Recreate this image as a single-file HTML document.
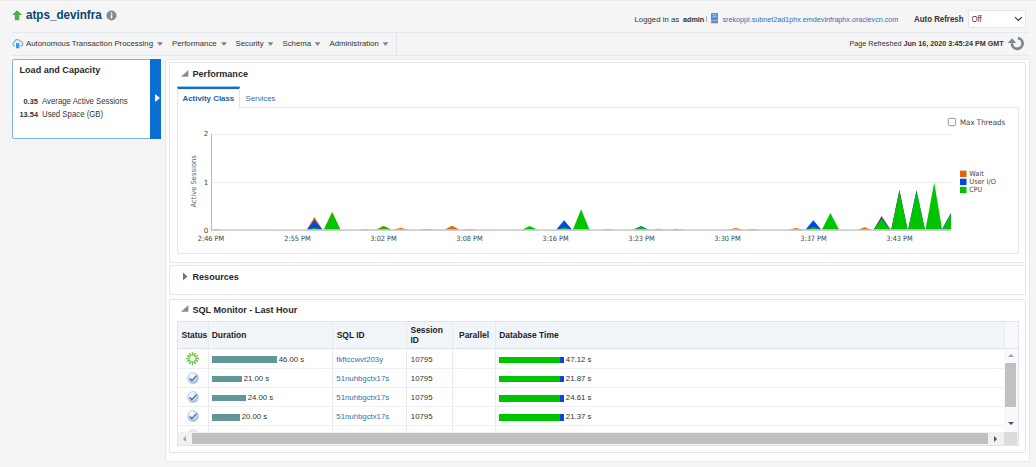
<!DOCTYPE html>
<html><head><meta charset="utf-8"><title>atps_devinfra</title>
<style>
html,body{margin:0;padding:0}
body{width:1036px;height:467px;overflow:hidden;background:#f5f5f5;font-family:"Liberation Sans",Arial,sans-serif;font-size:7.8px;color:#333;position:relative}
.abs{position:absolute;white-space:nowrap}
.t{position:absolute;white-space:nowrap;line-height:10px}
b,.b{font-weight:bold}
.hl{position:absolute;height:1px;background:#e4e9ef}
.panel{position:absolute;background:#fff;border:1px solid #e0e6ec;border-radius:2px;box-sizing:border-box}
.menu .t{top:38.5px}
.arr{position:absolute;width:5.8px;height:3.7px;background:#80868c;clip-path:polygon(0 0,100% 0,50% 100%);top:42.2px;margin-left:0.1px}
.ph{font-size:9.08px;font-weight:bold;color:#2a2a2a}
th,td{padding:0}
.cell{position:absolute;white-space:nowrap;line-height:10px}
.link{color:#2f6fb5}
.hd{transform:translateY(0.7px) scaleY(1.05);transform-origin:0 80%}
.hd2{transform:translateY(-0.3px) scaleY(1.06);transform-origin:0 80%}
</style></head><body>
<div class="abs" style="left:0;top:0;width:1036px;height:1px;background:#ebebeb"></div>

<!-- title row -->
<svg class="abs" style="left:11px;top:8.6px" width="13" height="13" viewBox="0 0 13 13"><path d="M6 1.2 L11.2 5.9 H8.3 V11.3 H3.8 V5.9 H1 Z" fill="#4cae4f"/></svg>
<div class="t" style="left:26px;top:7.6px;font-size:11.65px;line-height:14px;font-weight:bold;color:#0d4470;transform:scaleY(1.06);transform-origin:50% 70%">atps_devinfra</div>
<svg class="abs" style="left:105.7px;top:9.5px" width="11" height="11" viewBox="0 0 11 11"><circle cx="5.5" cy="5.5" r="5" fill="#878a8d"/><rect x="4.8" y="4.6" width="1.5" height="3.8" fill="#fff"/><rect x="4.8" y="2.5" width="1.5" height="1.4" fill="#fff"/></svg>

<div class="t" style="left:634.5px;top:14px;transform:translateY(0.7px) scaleY(1.02);transform-origin:0 80%">Logged in as</div>
<div class="t b" style="left:683.3px;top:14px;font-size:7.8px;transform:translateY(0.7px) scale(0.925,1.03);transform-origin:0 80%">admin</div>
<div class="abs" style="left:706px;top:15.5px;width:1px;height:6px;background:#a9b7c6"></div>
<svg class="abs" style="left:711px;top:13px" width="7" height="10.5" viewBox="0 0 7 10.5"><rect x="0" y="0" width="7" height="7.6" rx="0.6" fill="#4a8fe0"/><rect x="1.3" y="1.3" width="4.4" height="0.9" fill="#a9cdf5"/><rect x="1.3" y="3.3" width="4.4" height="0.9" fill="#a9cdf5"/><rect x="0" y="7.6" width="7" height="2.7" fill="#7f93a8"/><rect x="1" y="8.5" width="2" height="0.9" fill="#5f7489"/><rect x="4" y="8.5" width="2" height="0.9" fill="#5f7489"/></svg>
<div class="t link hd" style="left:722.5px;top:14px;font-size:7.2px">srekoppi.subnet2ad1phx.emdevinfraphx.oraclevcn.com</div>
<div class="t b hd" style="left:914px;top:14px;font-size:7.9px">Auto Refresh</div>
<div class="abs" style="left:968px;top:10px;width:58px;height:17.5px;box-sizing:border-box;background:#fff;border:1px solid #e3e7ea;border-radius:2px"></div>
<div class="t hd" style="left:971.5px;top:14px">Off</div>
<svg class="abs" style="left:1014px;top:16px" width="9" height="6" viewBox="0 0 9 6"><path d="M1 1.2 L4.4 4.5 L7.8 1.2" fill="none" stroke="#2a2a2a" stroke-width="1.05"/></svg>

<div class="hl" style="left:12px;top:32px;width:1017px"></div>

<!-- menu row -->
<div class="menu">
<svg class="abs" style="left:12px;top:38px" width="12" height="11" viewBox="0 0 12 11"><path transform="translate(0.1,0.9) scale(0.94,0.92)" d="M3 7.6 H2.6 A2.2 2.2 0 0 1 2.5 3.3 A3.1 3.1 0 0 1 8.4 2.6 A2.5 2.5 0 0 1 9 7.6 H8.6" fill="none" stroke="#68b3eb" stroke-width="1.25"/><rect x="4" y="5" width="3.3" height="5.3" fill="#4595e5"/></svg>
<div class="t" style="left:26px">Autonomous Transaction Processing</div><div class="arr" style="left:157px"></div>
<div class="t" style="left:172px">Performance</div><div class="arr" style="left:221px"></div>
<div class="t" style="left:235.5px">Security</div><div class="arr" style="left:267.5px"></div>
<div class="t" style="left:282.5px">Schema</div><div class="arr" style="left:314.5px"></div>
<div class="t" style="left:329.5px">Administration</div><div class="arr" style="left:382.5px"></div>
<div class="abs" style="left:396px;top:33px;width:1px;height:22px;background:#e1e6ec"></div>
</div>
<div class="t hd2" style="left:849.5px;top:38.7px;font-size:7.2px">Page Refreshed <b>Jun 16, 2020 3:45:24 PM GMT</b></div>
<svg class="abs" style="left:1007px;top:35px" width="18" height="17" viewBox="0 0 18 17"><path d="M10.9 3.2 A5.3 5.3 0 1 1 5.0 8.2" fill="none" stroke="#7f878e" stroke-width="2.8"/><path d="M0.7 8.0 L5 3.3 L9.3 8.0 Z" fill="#7f878e"/></svg>

<div class="hl" style="left:12px;top:55px;width:1017px"></div>

<!-- left panel -->
<div class="abs" style="left:12px;top:58.5px;width:149px;height:80px;box-sizing:border-box;background:#fff;border:1px solid #7eb3ea;border-radius:2px"></div>
<div class="abs" style="left:149.5px;top:58.5px;width:11.5px;height:80px;background:#0a6fd1"></div>
<div class="abs" style="left:154.5px;top:94.3px;width:0;height:0;border-top:4px solid transparent;border-bottom:4px solid transparent;border-left:5px solid #fff"></div>
<div class="t ph" style="left:19.5px;top:64px;line-height:12px">Load and Capacity</div>
<div class="t b" style="left:23.5px;top:96.5px;font-size:7.4px">0.35</div><div class="t hd2" style="left:42px;top:96.5px">Average Active Sessions</div>
<div class="t b" style="left:19.5px;top:109.5px;font-size:7.4px">13.54</div><div class="t hd2" style="left:42px;top:109.5px">Used Space (GB)</div>

<!-- main container -->
<div class="panel" style="left:165px;top:59px;width:865px;height:403px;border-color:#e5e9ee;background:#fefefe"></div>

<!-- Performance panel -->
<div class="panel" style="left:169px;top:62px;width:857px;height:201px"></div>
<svg class="abs" style="left:180.6px;top:69.8px" width="8" height="8" viewBox="0 0 8 8"><path d="M7.4 0 V6.7 H0 Z" fill="#878d93"/></svg>
<div class="t ph" style="left:192.5px;top:67.8px;line-height:12px">Performance</div>
<div class="abs" style="left:177px;top:107px;width:842px;height:146.5px;box-sizing:border-box;border:1px solid #e2e8ee;border-radius:0 2px 2px 2px"></div>
<div class="abs" style="left:177px;top:87px;width:63px;height:21px;box-sizing:border-box;background:#fff;border:1px solid #dfe6ee;border-top:2px solid #0a6fd1;border-bottom:none"></div><div class="abs" style="left:177px;top:86px;width:63px;height:1px;background:rgba(10,111,209,0.4)"></div>
<div class="t b" style="left:182.5px;top:93.8px;color:#22609c;font-size:7.9px">Activity Class</div>
<div class="t link" style="left:245.5px;top:93.5px">Services</div>


<svg class="abs" style="left:177px;top:108px" width="842" height="146" viewBox="177 108 842 146" font-family="DejaVu Sans, Liberation Sans, sans-serif" font-size="7.2" fill="#444">
<line x1="212" y1="134.500" x2="951" y2="134.500" stroke="#ececec" stroke-width="1"/>
<line x1="212" y1="182.500" x2="951" y2="182.500" stroke="#ececec" stroke-width="1"/>
<line x1="211.5" y1="134" x2="211.5" y2="231" stroke="#b9b9b9" stroke-width="1"/>
<g id="areas">
<path d="M212 230.0 L216 229.1 L223 230.0 Z" fill="#00c400"/>
<path d="M306.7 230.0 L314.4 217.0 L322.7 230.0 Z" fill="#e2660c"/>
<path d="M306.7 230.0 L314.4 220.0 L322.7 230.0 Z" fill="#0a44e6"/>
<path d="M306.7 230.0 L314.4 227.7 L322.7 230.0 Z" fill="#00c400"/>
<path d="M323.7 230.0 L332.2 211.7 L340.5 230.0 Z" fill="#e2660c"/>
<path d="M323.7 230.0 L332.2 212.4 L340.5 230.0 Z" fill="#00c400"/>
<path d="M357 230.0 L365.6 229.0 L374 230.0 Z" fill="#e2660c"/>
<path d="M375.5 230.0 L383.7 225.7 L392 230.0 Z" fill="#e2660c"/>
<path d="M375.5 230.0 L383.7 226.4 L392 230.0 Z" fill="#00c400"/>
<path d="M392.5 230.0 L400.7 227.8 L409 230.0 Z" fill="#e2660c"/>
<path d="M392.5 230.0 L400.7 229.0 L409 230.0 Z" fill="#00c400"/>
<path d="M418.5 230.0 L427 229.1 L436 230.0 Z" fill="#00c400"/>
<path d="M444 230.0 L452.1 225.8 L460.3 230.0 Z" fill="#e2660c"/>
<path d="M461 230.0 L469.5 229.1 L478 230.0 Z" fill="#00c400"/>
<path d="M521.5 230.0 L529.7 226.0 L538 230.0 Z" fill="#00c400"/>
<path d="M556 230.0 L564.1 220.2 L572.3 230.0 Z" fill="#0a44e6"/>
<path d="M556 230.0 L564.1 227.4 L572.3 230.0 Z" fill="#00c400"/>
<path d="M572.8 230.0 L581.1 209.2 L589.6 230.0 Z" fill="#00c400"/>
<path d="M599 230.0 L607.4 229.1 L616 230.0 Z" fill="#00c400"/>
<path d="M632.5 230.0 L641 226.1 L649.5 230.0 Z" fill="#0a44e6"/>
<path d="M632.5 230.0 L641 227.0 L649.5 230.0 Z" fill="#00c400"/>
<path d="M650 230.0 L658.5 228.8 L667 230.0 Z" fill="#e2660c"/>
<path d="M667.5 230.0 L676 228.8 L684.5 230.0 Z" fill="#e2660c"/>
<path d="M727 230.0 L735.8 227.9 L744.5 230.0 Z" fill="#e2660c"/>
<path d="M744.5 230.0 L753 229.1 L761.5 230.0 Z" fill="#00c400"/>
<path d="M787.5 230.0 L796 228.0 L804.5 230.0 Z" fill="#e2660c"/>
<path d="M787.5 230.0 L796 229.1 L804.5 230.0 Z" fill="#00c400"/>
<path d="M805.3 230.0 L813.3 220.2 L821.5 230.0 Z" fill="#0a44e6"/>
<path d="M805.3 230.0 L813.3 227.0 L821.5 230.0 Z" fill="#00c400"/>
<path d="M821.7 230.0 L830.4 213.0 L839.2 230.0 Z" fill="#00c400"/>
<path d="M857.5 230.0 L864.6 227.3 L872 230.0 Z" fill="#e2660c"/>
<path d="M857.5 230.0 L864.6 228.8 L872 230.0 Z" fill="#00c400"/>
<path d="M873.5 230.0 L881.6 215.8 L890.7 230.0 Z" fill="#e2660c"/>
<path d="M873.5 230.0 L881.6 217.0 L890.7 230.0 Z" fill="#0a44e6"/>
<path d="M873.5 230.0 L881.6 219.0 L890.7 230.0 Z" fill="#00c400"/>
<path d="M891.2 230.0 L899.4 189.8 L907.6 230.0 Z" fill="#e2660c"/>
<path d="M891.2 230.0 L899.4 190.4 L907.6 230.0 Z" fill="#0a44e6"/>
<path d="M891.2 230.0 L899.4 191.4 L907.6 230.0 Z" fill="#00c400"/>
<path d="M908.0 230.0 L916.5 190.0 L925.0 230.0 Z" fill="#0a44e6"/>
<path d="M908.0 230.0 L916.5 191.4 L925.0 230.0 Z" fill="#00c400"/>
<path d="M925.4 230.0 L934.2 182.4 L942.2 230.0 Z" fill="#00c400"/>
<path d="M941.6 230.0 L951 212.8 L951 230.0 Z" fill="#0a44e6"/>
<path d="M942.2 230.0 L951 213.7 L951 230.0 Z" fill="#00c400"/>
</g>
<line x1="212" y1="230.1" x2="951" y2="230.1" stroke="#cfcfcf" stroke-width="1.6"/>
<text x="208.3" y="136.4" text-anchor="end">2</text>
<text x="208.3" y="184.6" text-anchor="end">1</text>
<text x="208.3" y="232.6" text-anchor="end">0</text>
<text transform="translate(195.8,181.3) rotate(-90)" text-anchor="middle" fill="#666" textLength="52.3" lengthAdjust="spacingAndGlyphs">Active Sessions</text>
<text x="211" y="241.2" text-anchor="middle" textLength="26.4" lengthAdjust="spacingAndGlyphs">2:46 PM</text>
<text x="297.500" y="241.2" text-anchor="middle" textLength="26.4" lengthAdjust="spacingAndGlyphs">2:55 PM</text>
<text x="383.500" y="241.2" text-anchor="middle" textLength="26.4" lengthAdjust="spacingAndGlyphs">3:02 PM</text>
<text x="469.500" y="241.2" text-anchor="middle" textLength="26.4" lengthAdjust="spacingAndGlyphs">3:08 PM</text>
<text x="555.500" y="241.2" text-anchor="middle" textLength="26.4" lengthAdjust="spacingAndGlyphs">3:16 PM</text>
<text x="641.500" y="241.2" text-anchor="middle" textLength="26.4" lengthAdjust="spacingAndGlyphs">3:23 PM</text>
<text x="727.500" y="241.2" text-anchor="middle" textLength="26.4" lengthAdjust="spacingAndGlyphs">3:30 PM</text>
<text x="813.500" y="241.2" text-anchor="middle" textLength="26.4" lengthAdjust="spacingAndGlyphs">3:37 PM</text>
<text x="899.500" y="241.2" text-anchor="middle" textLength="26.4" lengthAdjust="spacingAndGlyphs">3:43 PM</text>
<rect x="948.3" y="118.3" width="7.4" height="7.4" rx="1.3" fill="#fff" stroke="#767676" stroke-width="0.8"/>
<text x="960" y="124.7" font-size="7.6" textLength="45.2" lengthAdjust="spacingAndGlyphs">Max Threads</text>
<rect x="960" y="170.6" width="6.5" height="6.4" fill="#e2660c"/><text x="969.3" y="176.3" textLength="14.5" lengthAdjust="spacingAndGlyphs">Wait</text>
<rect x="960" y="178.7" width="6.5" height="6.4" fill="#0a44e6"/><text x="969.3" y="184.3" textLength="26.8" lengthAdjust="spacingAndGlyphs">User I/O</text>
<rect x="960" y="186.8" width="6.5" height="6.4" fill="#00c400"/><text x="969.3" y="192.1" textLength="12.7" lengthAdjust="spacingAndGlyphs">CPU</text>
</svg>

<!-- Resources panel -->
<div class="panel" style="left:169px;top:265px;width:857px;height:30px"></div>
<svg class="abs" style="left:182px;top:271.500px" width="7" height="9" viewBox="0 0 7 9"><path d="M1 0.500 L5.500 4.500 L1 8.500 Z" fill="#6f767c"/></svg>
<div class="t ph" style="left:192.500px;top:270.500px;line-height:12px">Resources</div>

<!-- SQL Monitor panel -->
<div class="panel" style="left:169px;top:299px;width:857px;height:154px"></div>
<svg class="abs" style="left:180.6px;top:305.3px" width="8" height="8" viewBox="0 0 8 8"><path d="M7.4 0 V6.7 H0 Z" fill="#878d93"/></svg>
<div class="t ph" style="left:192.500px;top:304px;line-height:12px;font-weight:bold">SQL Monitor - Last Hour</div>

<div id="tbl" class="abs" style="left:177px;top:321px;width:842px;height:125px;box-sizing:border-box;border:1px solid #dfe5eb;background:#fff;overflow:hidden">
<div class="abs" style="left:0;top:0;width:826px;height:26.5px;background:#f1f4f8;border-bottom:1px solid #dde3ea;box-sizing:border-box"></div>
<div class="abs" style="left:826px;top:0;width:14px;height:26.5px;background:#f7f9fc;border-bottom:1px solid #dde3ea;box-sizing:border-box"></div>
<div class="abs" style="left:29.6px;top:0;width:1px;height:110px;background:#e6ebf0"></div>
<div class="abs" style="left:153.8px;top:0;width:1px;height:110px;background:#e6ebf0"></div>
<div class="abs" style="left:228.3px;top:0;width:1px;height:110px;background:#e6ebf0"></div>
<div class="abs" style="left:274.3px;top:0;width:1px;height:110px;background:#e6ebf0"></div>
<div class="abs" style="left:317.3px;top:0;width:1px;height:110px;background:#e6ebf0"></div>
<div class="abs" style="left:825.5px;top:0;width:1px;height:26.5px;background:#e6ebf0"></div>
<div class="cell b" style="left:3.5px;top:8.3px;color:#222;font-size:8.45px">Status</div>
<div class="cell b" style="left:33.7px;top:8.3px;color:#222;font-size:8.45px">Duration</div>
<div class="cell b" style="left:158.7px;top:8.3px;color:#222;font-size:8.45px">SQL ID</div>
<div class="cell b" style="left:232.5px;top:3.4px;color:#222;font-size:8.45px">Session</div>
<div class="cell b" style="left:232.5px;top:12.8px;color:#222;font-size:8.45px">ID</div>
<div class="cell b" style="left:281px;top:8.3px;color:#222;font-size:8.45px">Parallel</div>
<div class="cell b" style="left:321.2px;top:8.3px;color:#222;font-size:8.45px">Database Time</div>
<div class="abs" style="left:0;top:46.2px;width:826px;height:1px;background:#edf0f3"></div>
<div class="abs" style="left:0;top:64.8px;width:826px;height:1px;background:#edf0f3"></div>
<div class="abs" style="left:0;top:84.3px;width:826px;height:1px;background:#edf0f3"></div>
<div class="abs" style="left:0;top:103.1px;width:826px;height:1px;background:#edf0f3"></div>
<div class="abs" style="left:33.7px;top:34.3px;width:65px;height:6.7px;background:#62979a"></div>
<div class="cell" style="left:100.7px;top:32.6px">46.00 s</div>
<div class="cell link" style="left:158.3px;top:32.6px">fkftccwvt203y</div>
<div class="cell" style="left:232.8px;top:32.6px">10795</div>
<div class="abs" style="left:321.2px;top:34.5px;width:61px;height:6.5px;background:#00c400"></div>
<div class="abs" style="left:382.2px;top:34.5px;width:4px;height:6.5px;background:#0a44e6"></div>
<div class="cell" style="left:387.8px;top:32.6px">47.12 s</div>
<svg class="abs" style="left:8.2px;top:30.2px" width="13" height="13" viewBox="-6.5 -6.5 13 13"><g stroke="#6ac63b" stroke-width="1.6"><line x1="0" y1="-2.7" x2="0" y2="-6.3" transform="rotate(0)"/><line x1="0" y1="-2.7" x2="0" y2="-6.3" transform="rotate(30)"/><line x1="0" y1="-2.7" x2="0" y2="-6.3" transform="rotate(60)"/><line x1="0" y1="-2.7" x2="0" y2="-6.3" transform="rotate(90)"/><line x1="0" y1="-2.7" x2="0" y2="-6.3" transform="rotate(120)"/><line x1="0" y1="-2.7" x2="0" y2="-6.3" transform="rotate(150)"/><line x1="0" y1="-2.7" x2="0" y2="-6.3" transform="rotate(180)"/><line x1="0" y1="-2.7" x2="0" y2="-6.3" transform="rotate(210)"/><line x1="0" y1="-2.7" x2="0" y2="-6.3" transform="rotate(240)"/><line x1="0" y1="-2.7" x2="0" y2="-6.3" transform="rotate(270)"/><line x1="0" y1="-2.7" x2="0" y2="-6.3" transform="rotate(300)"/><line x1="0" y1="-2.7" x2="0" y2="-6.3" transform="rotate(330)"/></g></svg>
<div class="abs" style="left:33.7px;top:53.7px;width:30px;height:6.7px;background:#62979a"></div>
<div class="cell" style="left:65.7px;top:52.0px">21.00 s</div>
<div class="cell link" style="left:158.3px;top:52.0px">51nuhbgctx17s</div>
<div class="cell" style="left:232.8px;top:52.0px">10795</div>
<div class="abs" style="left:321.2px;top:53.9px;width:61px;height:6.5px;background:#00c400"></div>
<div class="abs" style="left:382.2px;top:53.9px;width:4px;height:6.5px;background:#0a44e6"></div>
<div class="cell" style="left:387.8px;top:52.0px">21.87 s</div>
<svg class="abs" style="left:8.8px;top:50.2px" width="12" height="12" viewBox="0 0 12 12"><defs><radialGradient id="g1" cx="0.4" cy="0.3" r="0.8"><stop offset="0" stop-color="#ffffff"/><stop offset="0.5" stop-color="#d5e3e8"/><stop offset="1" stop-color="#8ea9b4"/></radialGradient></defs><circle cx="6" cy="6" r="5.5" fill="url(#g1)" stroke="#a9bac6" stroke-width="0.5"/><path d="M2.6 6.5 L4.8 8.6 L9.6 3.6" fill="none" stroke="#4163dc" stroke-width="1.35"/></svg>
<div class="abs" style="left:33.7px;top:72.8px;width:34px;height:6.7px;background:#62979a"></div>
<div class="cell" style="left:69.7px;top:71.0px">24.00 s</div>
<div class="cell link" style="left:158.3px;top:71.0px">51nuhbgctx17s</div>
<div class="cell" style="left:232.8px;top:71.0px">10795</div>
<div class="abs" style="left:321.2px;top:73.0px;width:61px;height:6.5px;background:#00c400"></div>
<div class="abs" style="left:382.2px;top:73.0px;width:4px;height:6.5px;background:#0a44e6"></div>
<div class="cell" style="left:387.8px;top:71.0px">24.61 s</div>
<svg class="abs" style="left:8.8px;top:69.2px" width="12" height="12" viewBox="0 0 12 12"><defs><radialGradient id="g2" cx="0.4" cy="0.3" r="0.8"><stop offset="0" stop-color="#ffffff"/><stop offset="0.5" stop-color="#d5e3e8"/><stop offset="1" stop-color="#8ea9b4"/></radialGradient></defs><circle cx="6" cy="6" r="5.5" fill="url(#g2)" stroke="#a9bac6" stroke-width="0.5"/><path d="M2.6 6.5 L4.8 8.6 L9.6 3.6" fill="none" stroke="#4163dc" stroke-width="1.35"/></svg>
<div class="abs" style="left:33.7px;top:91.9px;width:28px;height:6.7px;background:#62979a"></div>
<div class="cell" style="left:63.7px;top:90.2px">20.00 s</div>
<div class="cell link" style="left:158.3px;top:90.2px">51nuhbgctx17s</div>
<div class="cell" style="left:232.8px;top:90.2px">10795</div>
<div class="abs" style="left:321.2px;top:92.1px;width:61px;height:6.5px;background:#00c400"></div>
<div class="abs" style="left:382.2px;top:92.1px;width:4px;height:6.5px;background:#0a44e6"></div>
<div class="cell" style="left:387.8px;top:90.2px">21.37 s</div>
<svg class="abs" style="left:8.8px;top:88.4px" width="12" height="12" viewBox="0 0 12 12"><defs><radialGradient id="g3" cx="0.4" cy="0.3" r="0.8"><stop offset="0" stop-color="#ffffff"/><stop offset="0.5" stop-color="#d5e3e8"/><stop offset="1" stop-color="#8ea9b4"/></radialGradient></defs><circle cx="6" cy="6" r="5.5" fill="url(#g3)" stroke="#a9bac6" stroke-width="0.5"/><path d="M2.6 6.5 L4.8 8.6 L9.6 3.6" fill="none" stroke="#4163dc" stroke-width="1.35"/></svg>
<svg class="abs" style="left:8.8px;top:106.8px" width="12" height="12" viewBox="0 0 12 12"><circle cx="6" cy="6" r="5.5" fill="#e6edf2" stroke="#c4d0d8" stroke-width="0.5"/></svg>
<div class="abs" style="left:826px;top:26.5px;width:14px;height:83.5px;background:#f8f9fa"></div>
<div class="abs" style="left:827px;top:41px;width:11px;height:44px;background:#c1c1c1"></div>
<div class="abs" style="left:829.5px;top:31.5px;width:0;height:0;border-left:3px solid transparent;border-right:3px solid transparent;border-bottom:3.5px solid #a0a0a0"></div>
<div class="abs" style="left:829.5px;top:100px;width:0;height:0;border-left:3px solid transparent;border-right:3px solid transparent;border-top:3.5px solid #505050"></div>
<div class="abs" style="left:0;top:110px;width:840px;height:13px;background:#f1f1f1"></div>
<div class="abs" style="left:826px;top:110px;width:13px;height:13px;background:#dcdcdc"></div>
<div class="abs" style="left:13.5px;top:111px;width:796.5px;height:11px;background:#c1c1c1"></div>
<div class="abs" style="left:4.5px;top:113.5px;width:0;height:0;border-top:3px solid transparent;border-bottom:3px solid transparent;border-right:3.5px solid #a3a3a3"></div>
<div class="abs" style="left:816.3px;top:113.5px;width:0;height:0;border-top:3px solid transparent;border-bottom:3px solid transparent;border-left:3.5px solid #505050"></div>
</div>
</body></html>
